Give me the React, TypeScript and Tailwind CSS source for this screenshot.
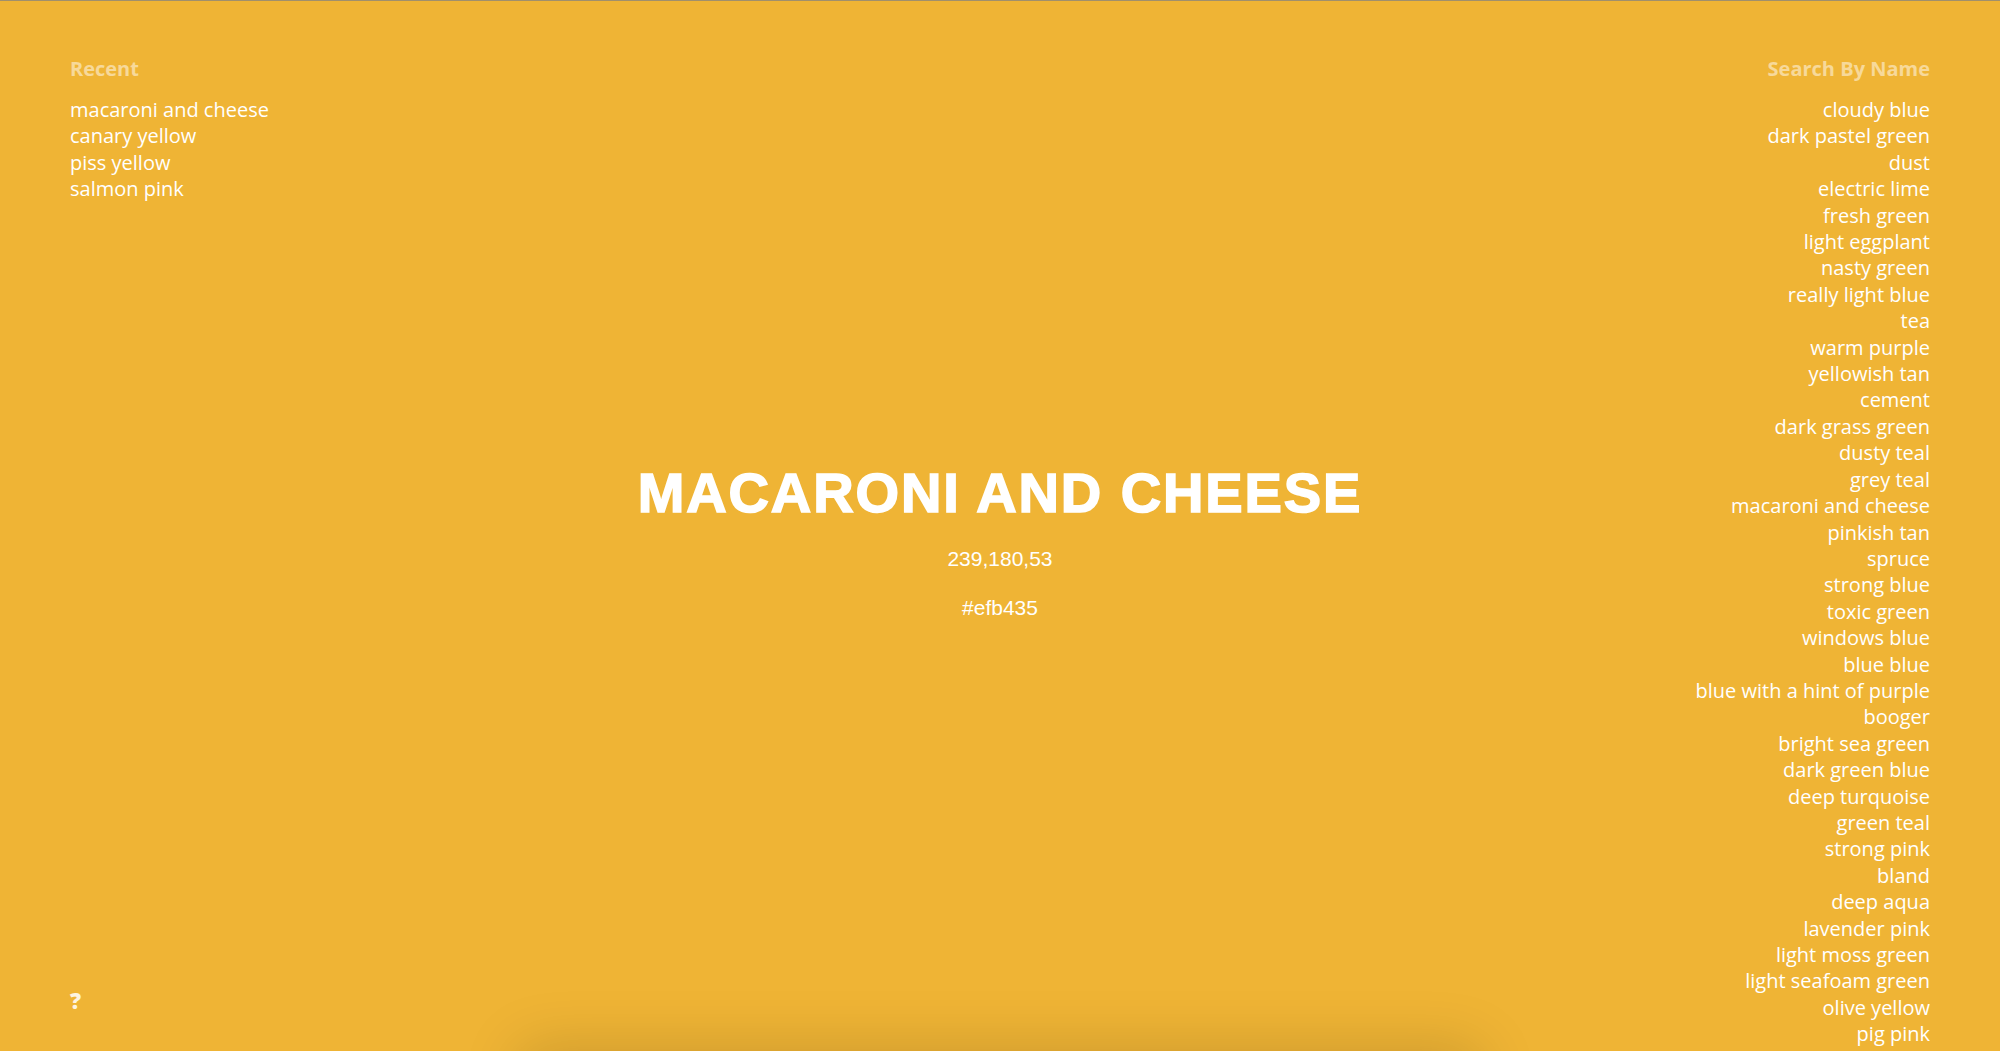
const recent = ['macaroni and cheese', 'canary yellow', 'piss yellow', 'salmon pink'];

const names = [
  'cloudy blue',
  'dark pastel green',
  'dust',
  'electric lime',
  'fresh green',
  'light eggplant',
  'nasty green',
  'really light blue',
  'tea',
  'warm purple',
  'yellowish tan',
  'cement',
  'dark grass green',
  'dusty teal',
  'grey teal',
  'macaroni and cheese',
  'pinkish tan',
  'spruce',
  'strong blue',
  'toxic green',
  'windows blue',
  'blue blue',
  'blue with a hint of purple',
  'booger',
  'bright sea green',
  'dark green blue',
  'deep turquoise',
  'green teal',
  'strong pink',
  'bland',
  'deep aqua',
  'lavender pink',
  'light moss green',
  'light seafoam green',
  'olive yellow',
  'pig pink',
];

const App = () => {
  return (
    <div className="relative h-screen overflow-hidden border-t border-[#a08f6c] bg-[#efb435] font-['Open_Sans',sans-serif] text-white">
      <div className="grid h-full grid-cols-[1fr_auto_1fr] grid-rows-1 px-[70px]">
        {/* recent colours */}
        <aside className="flex min-h-0 flex-col justify-between pt-[54px] pb-[37px]">
          <div>
            <h3 className="text-[20px] leading-[28px] font-bold text-white/50">Recent</h3>
            <ul className="mt-[14px] text-[20px] leading-[26.4px]">
              {recent.map((name) => (
                <li key={name} className="cursor-pointer">{name}</li>
              ))}
            </ul>
          </div>
          <button className="w-fit text-[22px] leading-[28px] font-extrabold text-white/85">?</button>
        </aside>

        {/* current colour */}
        <main className="flex min-h-0 flex-col items-center justify-center pt-[29px] font-['Liberation_Sans',Arial,sans-serif]">
          <h1 className="text-[56px] leading-[1.2] font-bold tracking-[1.9px] whitespace-nowrap [-webkit-text-stroke:1.6px_white]">
            MACARONI AND CHEESE
          </h1>
          <p className="mt-[19px] text-[21px] leading-[28px]">239,180,53</p>
          <p className="mt-[21px] text-[21px] leading-[28px]">#efb435</p>
        </main>

        {/* all names */}
        <aside className="min-h-0 overflow-hidden pt-[54px] text-right">
          <h3 className="text-[20px] leading-[28px] font-bold text-white/50">Search By Name</h3>
          <ul className="mt-[14px] text-[20px] leading-[26.4px]">
            {names.map((name, index) => (
              <li key={index} className="cursor-pointer">{name}</li>
            ))}
          </ul>
        </aside>
      </div>

      {/* panel just below the fold */}
      <div className="absolute top-full left-1/2 h-[200px] w-[960px] -translate-x-1/2 rounded-lg bg-white shadow-[0_-4px_60px_rgba(0,0,0,0.15)]" />
    </div>
  );
};

export default App;
